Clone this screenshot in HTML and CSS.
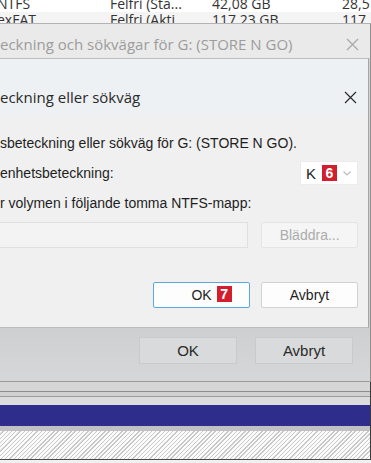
FILE: index.html
```html
<!DOCTYPE html>
<html lang="sv">
<head>
  <meta charset="UTF-8" />
  <meta name="viewport" content="width=device-width, initial-scale=1.0" />
  <title>Ändra enhetsbeteckning</title>
  <link rel="stylesheet" href="styles.css">
</head>
<body>
  <div class="volumes">
    <div class="vol-row">
      <span>NTFS</span><span>Felfri (Sta...</span><span>42,08 GB</span><span>28,5</span>
    </div>
    <div class="vol-row alt">
      <span>exFAT</span><span>Felfri (Akti</span><span>117,23 GB</span><span>117</span>
    </div>
  </div>

  <div class="outer">
    <div class="outer-title">
      <span>eckning och sökvägar för G: (STORE N GO)</span>
      <svg class="close" width="13" height="13" viewBox="0 0 13 13"><path d="M1 1 L12 12 M12 1 L1 12" /></svg>
    </div>

    <div class="outer-body">
      <div class="inner">
        <div class="inner-title">
          <span>eckning eller sökväg</span>
          <svg class="close dark" width="13" height="13" viewBox="0 0 13 13"><path d="M1 1 L12 12 M12 1 L1 12" /></svg>
        </div>

        <div class="inner-body">
          <p class="line">sbeteckning eller sökväg för G: (STORE N GO).</p>

          <div class="letter-row">
            <span>enhetsbeteckning:</span>
            <div class="combo">
              <span>K</span>
              <span class="badge">6</span>
              <svg class="chevron" width="8" height="5" viewBox="0 0 8 5"><path d="M0.5 0.5 L4 4 L7.5 0.5" /></svg>
            </div>
          </div>

          <p class="line">r volymen i följande tomma NTFS-mapp:</p>

          <div class="path-row">
            <div class="path-input"></div>
            <button class="btn disabled">Bläddra...</button>
          </div>

          <div class="actions">
            <button class="btn default"><span class="label">OK<span class="badge marker">7</span></span></button>
            <button class="btn">Avbryt</button>
          </div>
        </div>
      </div>

      <div class="outer-actions">
        <button class="obtn">OK</button>
        <button class="obtn">Avbryt</button>
      </div>
    </div>
  </div>

  <div class="diskmap">
    <div class="map-lines"></div>
    <div class="partition-bar"></div>
    <div class="hatch"></div>
  </div>
</body>
</html>
```

FILE: styles.css
```css
body {
  margin: 0;
  width: 371px;
  height: 463px;
  overflow: hidden;
  background-color: #f0f0f0;
  font-family: "Liberation Sans", Arial, sans-serif;
  color: #1e1e1e;
}
p {
  margin: 0;
}

/* volume list behind the dialogs */
.volumes {
  height: 23px;
  overflow: hidden;
  background-color: #ffffff;
}
.vol-row {
  display: grid;
  grid-template-columns: 113px 102px 130px 1fr;
  height: 16px;
  line-height: 16px;
  margin-left: -3px;
  font-family: "Open Sans", sans-serif;
  font-size: 14px;
  color: #333;
  white-space: nowrap;
}
.vol-row:first-child {
  margin-top: -4px;
}
.vol-row.alt {
  background-color: #f4f4f4;
}

/* outer dialog */
.outer {
  width: 371px;
  box-sizing: border-box;
  border-top: 1px solid #b3b3b3;
  border-right: 1px solid #8f8f8f;
  border-bottom: 1px solid #9a9a9a;
  background-color: #cfd1d2;
}
.outer-title {
  height: 34px;
  box-sizing: border-box;
  padding: 6px 11px 0 0;
  display: flex;
  align-items: center;
  justify-content: space-between;
  background-color: #eaeaea;
  font-family: "Open Sans", sans-serif;
  font-size: 15px;
  color: #9c9c9c;
  white-space: nowrap;
}
.close path {
  stroke: #a8a8a8;
  stroke-width: 1.2;
  fill: none;
}
.close.dark path {
  stroke: #2b2b2b;
}
.outer-body {
  padding-right: 1px;
  background: linear-gradient(#d3d5d6, #cbcdce 80%, #d6d7d8);
}

/* inner dialog */
.inner {
  border-top: 1px solid #bdbdbd;
  border-right: 1px solid #a5a5a5;
  border-bottom: 1px solid #bcbcbc;
  background-color: #f0f0f0;
}
.inner-title {
  height: 56px;
  box-sizing: border-box;
  padding: 28px 10px 0 0;
  display: flex;
  align-items: flex-start;
  justify-content: space-between;
  background-color: #eef1f4;
  font-family: "Open Sans", sans-serif;
  font-size: 15px;
  line-height: 20px;
  color: #2a2a2a;
}
.inner-title .close {
  margin-top: 4px;
  margin-right: 1px;
}
.inner-body {
  padding: 20px 10px 19px 0;
  font-size: 14px;
}
.line {
  line-height: 16px;
  white-space: nowrap;
}
.letter-row {
  margin: 10px 0;
  display: flex;
  align-items: center;
  justify-content: space-between;
}
.combo {
  width: 58px;
  height: 24px;
  box-sizing: border-box;
  padding: 0 6px 0 5px;
  display: flex;
  align-items: center;
  gap: 6px;
  background-color: #ffffff;
  border: 1px solid #ececec;
  font-size: 15px;
}
.chevron {
  margin-left: auto;
}
.chevron path {
  stroke: #bdbdbd;
  stroke-width: 1.2;
  fill: none;
}
.badge {
  display: inline-block;
  width: 15px;
  height: 16px;
  line-height: 16px;
  text-align: center;
  background-color: #d21f2d;
  color: #ffffff;
  font-weight: bold;
  font-size: 14px;
}
.path-row {
  margin-top: 11px;
  display: flex;
  gap: 13px;
}
.path-input {
  width: 249px;
  height: 26px;
  box-sizing: border-box;
  background-color: #f3f3f3;
  border: 1px solid #e0e0e0;
  border-left: none;
}
.btn {
  width: 97px;
  height: 26px;
  padding: 0;
  box-sizing: border-box;
  background-color: #fdfdfd;
  border: 1px solid #d2d2d2;
  border-radius: 2px;
  font-family: "Liberation Sans", Arial, sans-serif;
  font-size: 14px;
  color: #1e1e1e;
}
.btn.disabled {
  background-color: #f5f5f5;
  border-color: #e4e4e4;
  color: #acacac;
}
.btn.default {
  border-color: #5aa9dc;
}
.actions {
  margin-top: 34px;
  display: flex;
  justify-content: flex-end;
  gap: 11px;
}
.label {
  position: relative;
}
.marker {
  position: absolute;
  left: calc(100% + 5px);
  top: -1px;
}
.outer-actions {
  padding: 9px 16px 17px 0;
  display: flex;
  justify-content: flex-end;
  gap: 18px;
}
.obtn {
  width: 98px;
  height: 27px;
  padding: 0;
  background-color: #d8dadb;
  border: 1px solid #c8cacb;
  font-family: "Liberation Sans", Arial, sans-serif;
  font-size: 15px;
  color: #2a2a2a;
}

/* disk map strip */
.diskmap {
  border-right: 1px solid #3a3a3a;
  border-bottom: 1px solid #4a4a4a;
  background-color: #d8d8d8;
}
.map-lines {
  height: 23px;
  box-sizing: border-box;
  border-top: 9px solid #d6d6d6;
  background: linear-gradient(#8c8c8c 0 1px, #d0d0d0 1px 5px, #9c9c9c 5px 6px, #dcdcdc 6px);
}
.partition-bar {
  height: 21px;
  background-color: #2e2d8c;
  border-bottom: 5px solid #bfc1c2;
}
.hatch {
  height: 28px;
  background: repeating-linear-gradient(135deg, #fbfbfb 0 2px, #c8c8c8 2px 3px);
}
```
